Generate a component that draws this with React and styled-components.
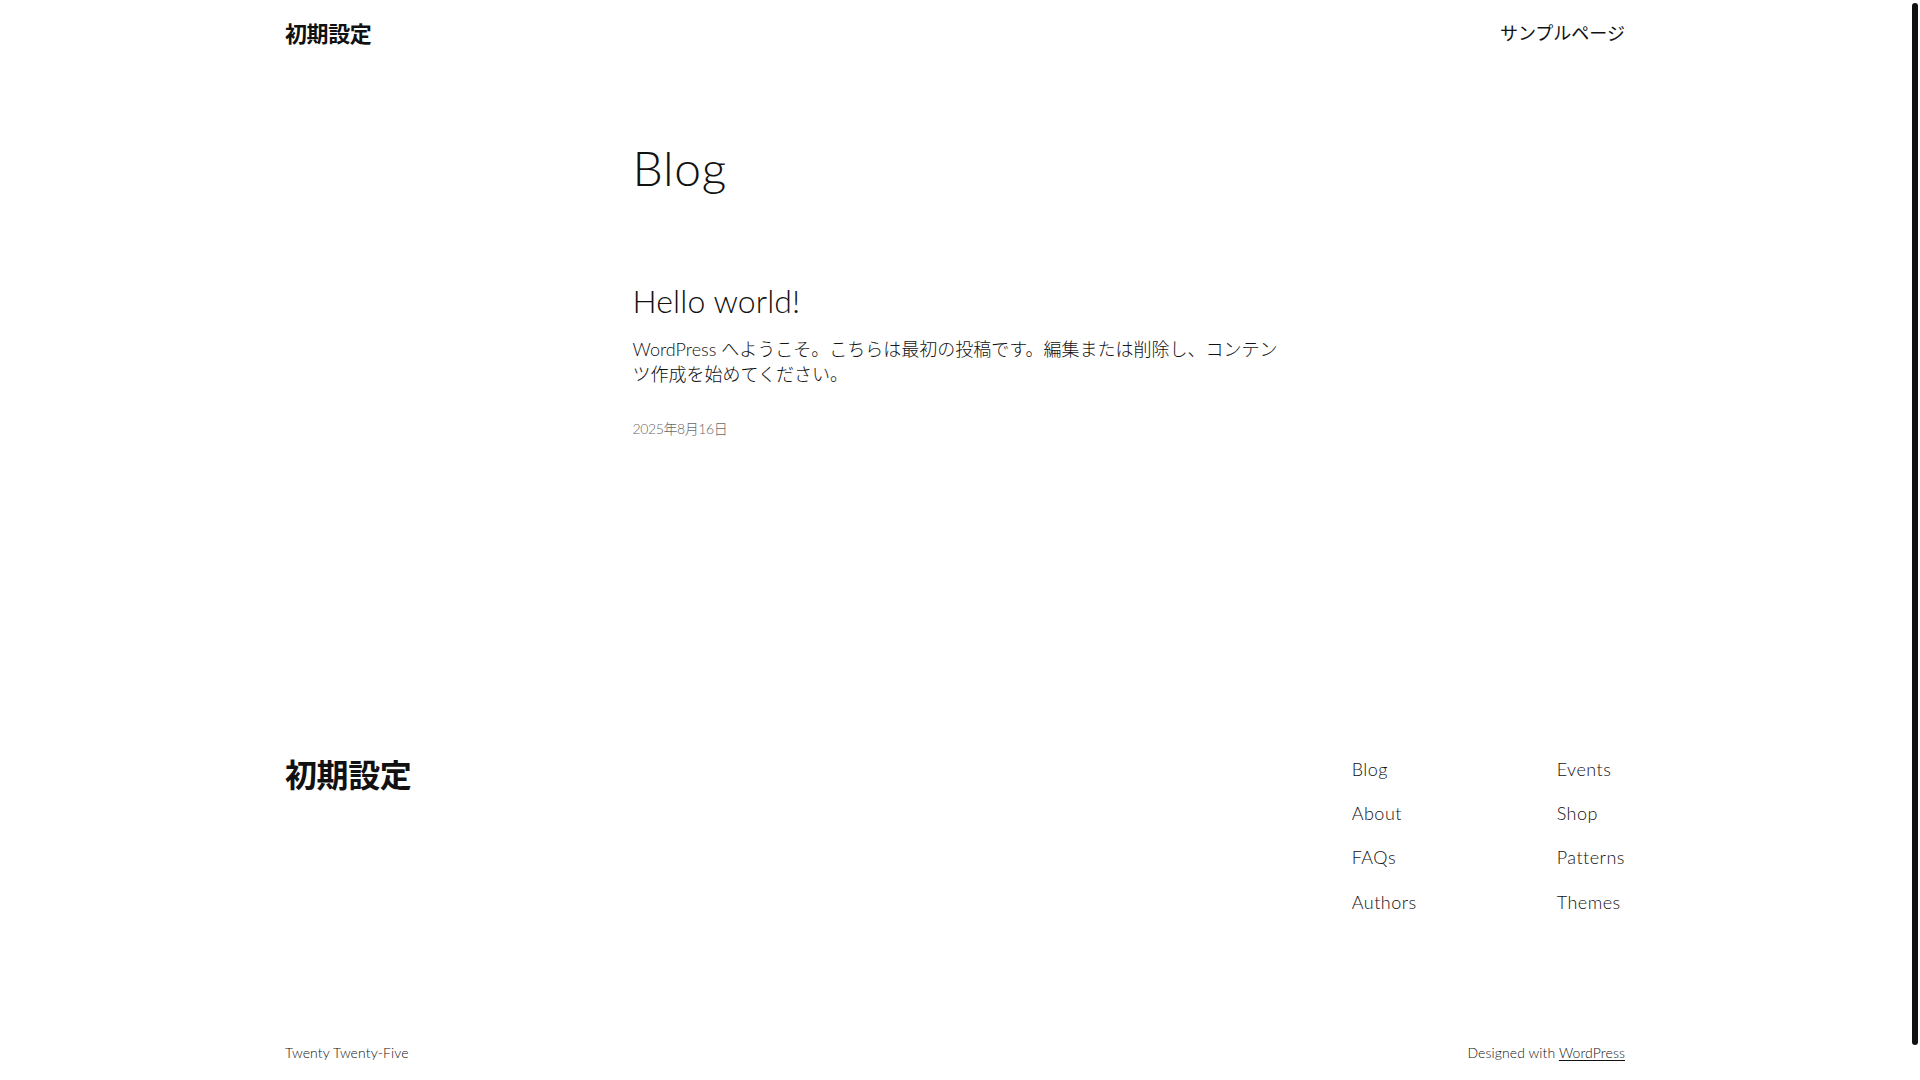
import React from "react";
import styled, { createGlobalStyle } from "styled-components";

const GlobalStyle = createGlobalStyle`
  html, body {
    margin: 0;
    padding: 0;
    background: #ffffff;
  }
  body {
    font-family: Lato, "Noto Sans CJK JP", sans-serif;
    font-weight: 300;
    color: #111111;
    -webkit-font-smoothing: antialiased;
  }
`;

const footerLinks = [
  ["Blog", "About", "FAQs", "Authors"],
  ["Events", "Shop", "Patterns", "Themes"],
];

const App = () => {
  return (
    <>
      <GlobalStyle />
      <StyledPage>
        <Header>
          <SiteTitle size="22px">初期設定</SiteTitle>
          <TopNav>
            <NavLink>サンプルページ</NavLink>
          </TopNav>
        </Header>

        <Main>
          <PageTitle>Blog</PageTitle>
          <Post>
            <PostTitle>Hello world!</PostTitle>
            <Excerpt>
              WordPress へようこそ。こちらは最初の投稿です。編集または削除し、コンテンツ作成を始めてください。
            </Excerpt>
            <PostDate>2025年8月16日</PostDate>
          </Post>
        </Main>

        <Footer>
          <FooterTop>
            <SiteTitle size="32px">初期設定</SiteTitle>
            <FooterNavs>
              {footerLinks.map((col, i) => (
                <FooterColumn key={i}>
                  {col.map((label) => (
                    <FooterLink key={label}>{label}</FooterLink>
                  ))}
                </FooterColumn>
              ))}
            </FooterNavs>
          </FooterTop>
          <Credits>
            <span>Twenty Twenty-Five</span>
            <span>
              Designed with <u>WordPress</u>
            </span>
          </Credits>
        </Footer>
      </StyledPage>
      <ScrollThumb />
    </>
  );
};

export default App;

// page is laid out in 1910px, the last 10px belong to the scrollbar
const StyledPage = styled.div`
  padding: 0 10px 53px 0;
`;

const ScrollThumb = styled.div`
  position: fixed;
  top: 3px;
  right: 2px;
  width: 6px;
  height: 1042px;
  border-radius: 3px;
  background: #111111;
`;

const Wide = styled.div`
  max-width: 1340px;
  margin: 0 auto;
`;

const Header = styled(Wide)`
  height: 68px;
  display: flex;
  align-items: center;
  justify-content: space-between;
`;

const SiteTitle = styled.div`
  font-size: ${(p) => p.size};
  font-weight: 700;
  line-height: 1.125;
  letter-spacing: -0.4px;
`;

const TopNav = styled.nav`
  display: flex;
  gap: 24px;
`;

const NavLink = styled.a`
  font-size: 18px;
  font-weight: 400;
  line-height: 1.4;
  color: #111111;
  cursor: pointer;
`;

const Main = styled.main`
  max-width: 645px;
  margin: 73px auto 0;
`;

const PageTitle = styled.h1`
  margin: 0;
  font-size: 48px;
  font-weight: 300;
  line-height: 1.125;
  letter-spacing: 0.7px;
`;

const Post = styled.article`
  margin-top: 88px;
`;

const PostTitle = styled.h2`
  margin: 0;
  font-size: 32px;
  font-weight: 300;
  line-height: 1.125;
  letter-spacing: 0.1px;
`;

const Excerpt = styled.p`
  margin: 18px 0 0;
  font-size: 18px;
  line-height: 1.4;
`;

const PostDate = styled.div`
  margin-top: 32px;
  font-size: 14px;
  line-height: 1.4;
  color: #686868;
  letter-spacing: -0.4px;
`;

const Footer = styled(Wide)`
  margin-top: 318px;
`;

const FooterTop = styled.div`
  display: flex;
  justify-content: space-between;
  align-items: flex-start;
`;

const FooterNavs = styled.div`
  display: flex;
  gap: 140px;
`;

const FooterColumn = styled.nav`
  display: flex;
  flex-direction: column;
  gap: 19px;
`;

const FooterLink = styled.a`
  font-size: 18px;
  line-height: 1.4;
  letter-spacing: 0.5px;
  color: #111111;
  cursor: pointer;
`;

const Credits = styled.div`
  margin-top: 128px;
  display: flex;
  justify-content: space-between;
  font-size: 14px;
  line-height: 1.4;
  letter-spacing: 0.1px;

  u {
    text-underline-offset: 2px;
  }
`;
